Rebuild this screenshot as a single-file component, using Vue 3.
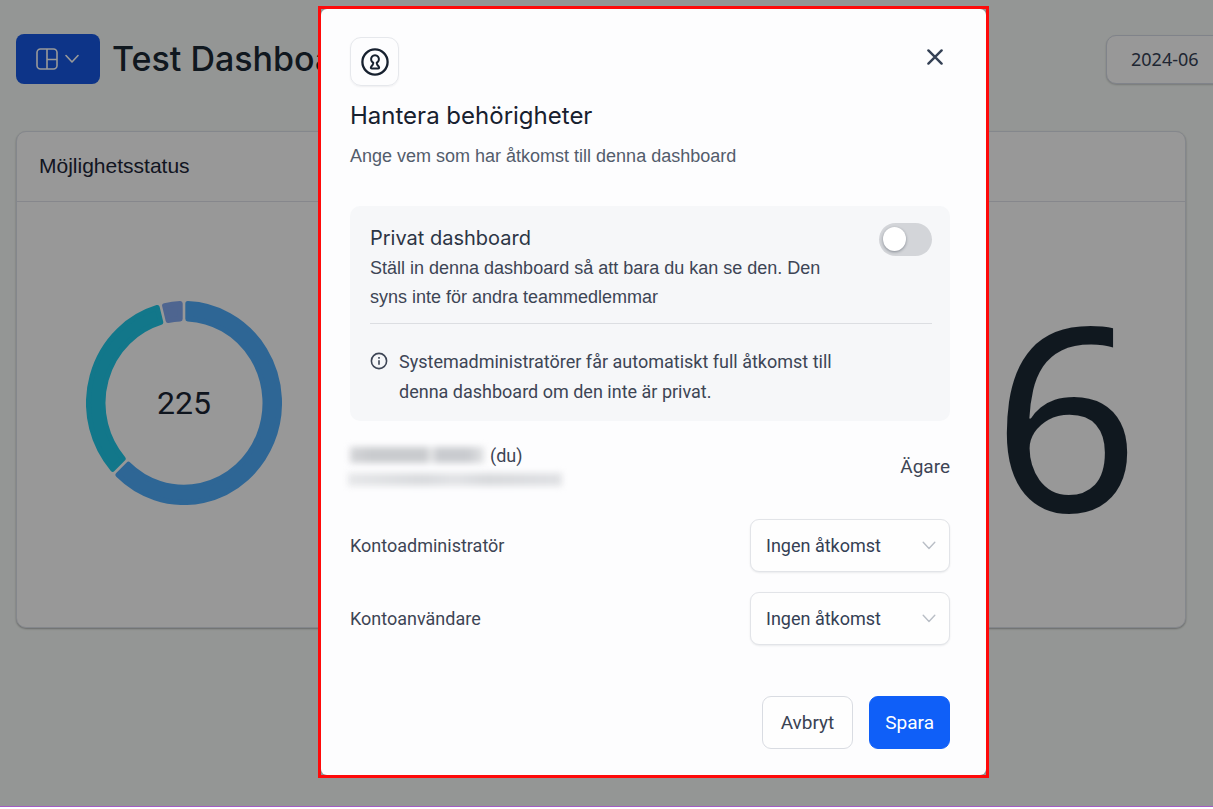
<script setup>
import { ref } from 'vue'

const isPrivate = ref(false)
const roles = ref([
  { id: 'role-admin', label: 'Kontoadministratör', access: 'none' },
  { id: 'role-user', label: 'Kontoanvändare', access: 'none' },
])

// Builds one ring segment, inset by the radius of its rounded corners.
function segment(from, to) {
  const outer = 95.5
  const inner = 81
  const point = (radius, degrees, pad) => {
    const angle = (degrees * Math.PI) / 180 + pad / radius
    return `${(98 + radius * Math.sin(angle)).toFixed(2)} ${(98 - radius * Math.cos(angle)).toFixed(2)}`
  }
  const large = to - from > 180 ? 1 : 0
  return [
    `M${point(outer, from, 3.8)}`,
    `A${outer} ${outer} 0 ${large} 1 ${point(outer, to, -3.8)}`,
    `L${point(inner, to, -3.8)}`,
    `A${inner} ${inner} 0 ${large} 0 ${point(inner, from, 3.8)}Z`,
  ].join(' ')
}

const segments = [
  { color: '#4eaaf8', d: segment(0, 226) },
  { color: '#1ec6e6', d: segment(226, 346) },
  { color: '#82a8f0', d: segment(346, 360) },
]
</script>

<template>
  <div class="screen">
    <main class="page">
      <header class="topbar">
        <button class="picker" type="button" aria-label="Välj dashboard">
          <svg width="22" height="22" viewBox="0 0 22 22" fill="none" stroke="currentColor" stroke-width="1.6">
            <rect x="1" y="1" width="20" height="20" rx="3.5" />
            <path d="M11 1v20M11 11.5h10" />
          </svg>
          <svg width="14" height="10" viewBox="0 0 14 10" fill="none" stroke="currentColor" stroke-width="1.6" stroke-linecap="round" stroke-linejoin="round">
            <path d="M1 1.5l6 6.5 6-6.5" />
          </svg>
        </button>
        <h1 class="title">Test Dashboard</h1>
        <button class="date" type="button">2024-06</button>
      </header>

      <div class="cards">
        <section class="card card-status">
          <h2 class="card-head">Möjlighetsstatus</h2>
          <div class="card-body">
            <div class="donut">
              <svg class="ring" viewBox="0 0 196 196" preserveAspectRatio="none" aria-hidden="true">
                <path v-for="s in segments" :key="s.color" :d="s.d" :fill="s.color" :stroke="s.color" stroke-width="5" stroke-linejoin="round" />
              </svg>
              <span class="total">225</span>
            </div>
          </div>
        </section>
        <section class="card card-count">
          <div class="card-head"></div>
          <div class="card-body"><span class="count">6</span></div>
        </section>
      </div>
    </main>

    <div class="overlay">
      <div class="frame">
        <section class="dialog" role="dialog" aria-modal="true" aria-labelledby="dialog-title">
          <div class="dialog-top">
            <span class="badge">
              <svg width="28" height="28" viewBox="0 0 28 28" fill="none" stroke="currentColor" stroke-linejoin="round">
                <circle cx="14" cy="14" r="12.6" stroke-width="2.3" />
                <path stroke-width="2" d="M12.200 15.400V14.600A3.900 3.900 0 1 1 15.800 14.600V15.400Q16 17 17.900 18.800Q18.700 20.600 17 20.600H11Q9.300 20.600 10.100 18.800Q12 17 12.200 15.400Z" />
              </svg>
            </span>
            <button class="close" type="button" aria-label="Stäng">
              <svg width="16" height="16" viewBox="0 0 16 16" fill="none" stroke="currentColor" stroke-width="2.4" stroke-linecap="round">
                <path d="M1.4 1.4l13.2 13.2M14.6 1.4L1.4 14.6" />
              </svg>
            </button>
          </div>
          <h2 id="dialog-title" class="dialog-title">Hantera behörigheter</h2>
          <p class="subtitle">Ange vem som har åtkomst till denna dashboard</p>

          <div class="panel">
            <div class="private">
              <div>
                <label class="private-label" for="private">Privat dashboard</label>
                <p class="private-text">Ställ in denna dashboard så att bara du kan se den. Den syns inte för andra teammedlemmar</p>
              </div>
              <input id="private" v-model="isPrivate" class="switch" type="checkbox" role="switch" />
            </div>
            <div class="info">
              <svg class="info-icon" width="18" height="18" viewBox="0 0 18 18" fill="none" stroke="currentColor" stroke-width="1.6">
                <circle cx="9" cy="9" r="7.6" />
                <path d="M9 8.2v4.6M9 5v1.7" />
              </svg>
              <p class="info-text">Systemadministratörer får automatiskt full åtkomst till denna dashboard om den inte är privat.</p>
            </div>
          </div>

          <div class="owner">
            <div class="person">
              <div class="name"><span class="hidden-name"></span><span>(du)</span></div>
              <div class="hidden-mail"></div>
            </div>
            <span class="owner-role">Ägare</span>
          </div>

          <div class="roles">
            <div v-for="role in roles" :key="role.id" class="role">
              <label :for="role.id">{{ role.label }}</label>
              <div class="select-box">
                <select :id="role.id" v-model="role.access" class="select">
                  <option value="none">Ingen åtkomst</option>
                </select>
                <svg class="chevron" width="14" height="9" viewBox="0 0 14 9" fill="none" stroke="currentColor" stroke-width="1.4" stroke-linecap="round" stroke-linejoin="round">
                  <path d="M1.2 1.2L7 7.4l5.800-6.200" />
                </svg>
              </div>
            </div>
          </div>

          <div class="actions">
            <button class="btn" type="button">Avbryt</button>
            <button class="btn primary" type="button">Spara</button>
          </div>
        </section>
      </div>
    </div>
  </div>
</template>

<style>
body {
  margin: 0;
}
</style>

<style scoped>
* {
  box-sizing: border-box;
}
h1,
h2,
p {
  margin: 0;
  font-weight: 400;
}
button {
  font: inherit;
  cursor: pointer;
}
svg {
  display: block;
}
.screen {
  position: relative;
  min-height: 100vh;
  overflow: hidden;
  font-family: Roboto, "Liberation Sans", sans-serif;
  font-size: 18px;
  color: #3d4555;
}
.page {
  min-height: 100vh;
  padding: 34px 27px 0 16px;
  background: #f7fbf8;
}
.topbar {
  display: flex;
  align-items: center;
  height: 50px;
}
.picker {
  display: flex;
  align-items: center;
  justify-content: center;
  gap: 7px;
  width: 84px;
  height: 50px;
  padding: 0 8px 0 6px;
  border: 0;
  border-radius: 8px;
  background: #1658e3;
  color: #fff;
}
.title {
  margin-left: 12px;
  font: 500 34px/48px Inter, sans-serif;
  color: #1c2835;
}
.date {
  flex: none;
  width: 124px;
  height: 49px;
  margin-left: auto;
  margin-right: -44px;
  padding: 0 0 0 24px;
  border: 1px solid #d5dae6;
  border-radius: 10px;
  background: #fdfdfd;
  box-shadow: 0 1px 2px #0003;
  font: 18px/24px "Noto Sans", sans-serif;
  text-align: left;
  color: #344054;
}
.cards {
  display: flex;
  justify-content: space-between;
  margin-top: 47px;
}
.card {
  display: flex;
  flex-direction: column;
  height: 497px;
  border: 1px solid #dde1ea;
  border-radius: 10px;
  background: #fdfdfd;
  box-shadow: 0 1px 2px #0000004d;
}
.card-status {
  width: 336px;
}
.card-count {
  width: 240px;
}
.card-head {
  height: 70px;
  padding: 0 22px;
  border-bottom: 1px solid #dfe2e9;
  font: 21px/68px "Liberation Sans", sans-serif;
  color: #1c2537;
}
.card-body {
  display: flex;
  flex: 1;
  align-items: center;
  justify-content: center;
  padding-bottom: 24px;
}
.card-count .card-body {
  padding-bottom: 6px;
}
.donut {
  display: grid;
  place-items: center;
  width: 196px;
  height: 204px;
}
.ring,
.total {
  grid-area: 1 / 1;
}
.ring {
  width: 196px;
  height: 204px;
}
.total {
  font-size: 32px;
  color: #1a2432;
}
.count {
  font: 256px/300px "Noto Sans", sans-serif;
  color: #1c2835;
}
.overlay {
  position: absolute;
  inset: 0;
  display: grid;
  grid-template-columns: minmax(0, 318fr) minmax(auto, 671px) minmax(0, 224fr);
  align-items: start;
  padding-top: 6px;
  border-bottom: 2px solid #fff;
  background: #0006;
  box-shadow: inset 0 -1px #a45cc4;
}
.frame {
  grid-column: 2;
  border: 3px solid #ff0a0a;
}
.dialog {
  padding: 28px 36px 26px 29px;
  border-radius: 6px;
  background: #fdfdfe;
}
.dialog-top {
  display: flex;
  align-items: center;
  justify-content: space-between;
  height: 49px;
}
.badge {
  display: grid;
  place-items: center;
  width: 49px;
  height: 49px;
  border: 1px solid #e6e8ec;
  border-radius: 11px;
  box-shadow: 0 1px 2px #1018280f;
  color: #17212f;
}
.close {
  display: grid;
  place-items: center;
  width: 30px;
  height: 30px;
  margin-bottom: 10px;
  padding: 0;
  border: 0;
  background: none;
  color: #344054;
}
.dialog-title {
  margin-top: 14px;
  font: 24px/32px Inter, sans-serif;
  color: #17202e;
}
.subtitle {
  margin-top: 12px;
  font: 18px/24px "Liberation Sans", sans-serif;
  color: #535c6c;
}
.panel {
  margin-top: 38px;
  padding: 17px 18px 14px 20px;
  border-radius: 10px;
  background: #f6f7f9;
}
.private {
  display: flex;
  align-items: flex-start;
  justify-content: space-between;
  gap: 40px;
  padding-bottom: 11px;
  border-bottom: 1px solid #dcdee2;
}
.private-label {
  display: block;
  font: 20px/31px Inter, sans-serif;
  color: #2c3545;
}
.private-text {
  font: 18px/29px "Liberation Sans", sans-serif;
}
.switch {
  appearance: none;
  flex: none;
  width: 53px;
  height: 33px;
  margin: 0;
  padding: 4px;
  border-radius: 17px;
  background: #d3d5d9;
}
.switch::before {
  content: "";
  display: block;
  width: 23px;
  height: 24px;
  border-radius: 50%;
  background: #fff;
  box-shadow: 0 1px 3px #10182866;
}
.switch:checked::before {
  margin-left: auto;
}
.info {
  display: flex;
  gap: 11px;
  margin-top: 23px;
}
.info-icon {
  flex: none;
  margin-top: 5px;
}
.info-text {
  max-width: 440px;
  line-height: 30px;
}
.owner {
  display: flex;
  align-items: center;
  justify-content: space-between;
  height: 53px;
  margin-top: 19px;
}
.owner-role {
  font-size: 19px;
}
.name {
  display: flex;
  align-items: center;
  gap: 6px;
  height: 28px;
}
.hidden-name {
  width: 134px;
  height: 16px;
  background: linear-gradient(90deg, #d4d5d8, #c9cbce 15% 57%, #e2e3e5 59% 62%, #c9cbcf 65% 88%, #e2e3e5);
  filter: blur(3px);
}
.hidden-mail {
  width: 214px;
  height: 13px;
  margin: 4px 0 6px -2px;
  background: linear-gradient(90deg, #e6e7e9, #d9dbde 35%, #e2e3e6 50%, #d8dadd 65%, #e0e1e4);
  filter: blur(3px);
}
.roles {
  display: grid;
  gap: 20px;
  margin-top: 26px;
}
.role {
  display: flex;
  align-items: center;
  justify-content: space-between;
}
.select-box {
  display: grid;
  align-items: center;
  width: 200px;
}
.select,
.chevron {
  grid-area: 1 / 1;
}
.select {
  appearance: none;
  width: 100%;
  height: 53px;
  padding: 0 40px 0 15px;
  border: 1px solid #e2e4e8;
  border-radius: 9px;
  background: #fefefe;
  box-shadow: 0 1px 2px #10182814;
  font: inherit;
  color: #344054;
}
.chevron {
  justify-self: end;
  margin-right: 14px;
  color: #b9bec6;
  pointer-events: none;
}
.actions {
  display: flex;
  justify-content: flex-end;
  gap: 16px;
  margin-top: 51px;
}
.btn {
  height: 53px;
  padding: 0 18px;
  border: 1px solid #d9dce2;
  border-radius: 9px;
  background: #fefefe;
  font-size: 19px;
  color: #3a4353;
}
.primary {
  padding: 0 15px;
  border-color: #0f5ff8;
  background: #0f5ff8;
  color: #fff;
}
</style>
